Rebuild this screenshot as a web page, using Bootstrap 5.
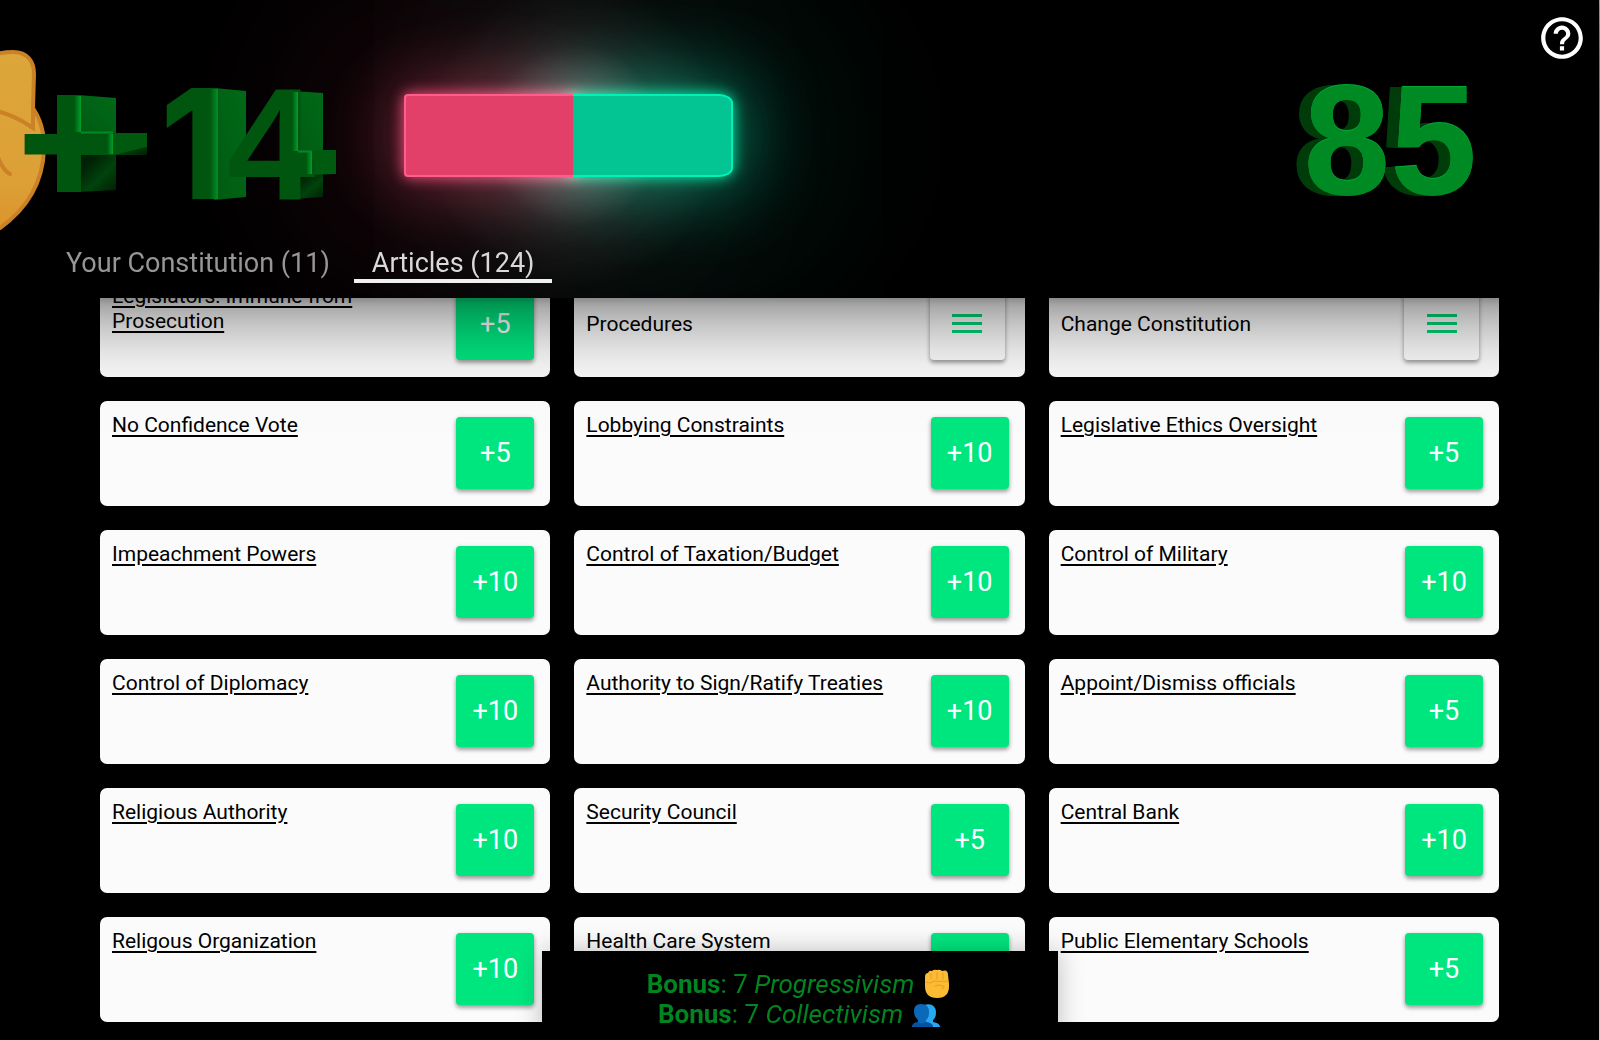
<!DOCTYPE html>
<html lang="en">
<head>
<meta charset="utf-8">
<meta name="viewport" content="width=device-width, initial-scale=1">
<title>Articles</title>
<link href="https://cdn.jsdelivr.net/npm/bootstrap@5.3.0/dist/css/bootstrap.min.css" rel="stylesheet">
<style>
  body { background: #000; color: #000; border-right: 1px solid #ccc; font-family: Roboto, "Noto Sans", sans-serif; font-size: 21px; line-height: 25px; overflow: hidden; }
  .topbar { right: 1px; height: 298px; isolation: isolate; box-shadow: 0 0 90px rgba(0,0,0,.75), 0 0 10px rgba(0,0,0,.25); background: #000; }
  .scene { height: 244px; }
  .scene-art { width: 360px; height: 244px; flex: none; overflow: hidden; font-family: Inter, "Liberation Sans", sans-serif; font-weight: 800; font-size: 152px; }
  .glyph-plus { font-size: 175px; font-weight: 700; }
  .glyph-four { font-family: "Liberation Sans", sans-serif; font-weight: 700; font-size: 160px; }
  .meter { width: 329px; height: 83px; margin: 94px 0 0 44px; position: relative; }
  .meter::before { content: ""; position: absolute; inset: -110px 10px -110px 22px; z-index: -1; background: radial-gradient(closest-side, rgba(190,200,200,.4), rgba(150,160,160,.08) 60%, transparent); }
  .meter-part { position: relative; border: 2px solid; }
  .meter-red { width: 169px; background: #e24069; border-color: #ff5c90; border-right: 0; border-radius: 4px 0 0 4px; }
  .meter-green { width: 160px; background: #03c593; border-color: #00f2b6; border-left: 0; border-radius: 0 14px 14px 0 / 0 9px 9px 0; }
  .meter-part::before { content: ""; position: absolute; inset: 0; z-index: -1; border-radius: inherit; mix-blend-mode: screen; }
  .meter-red::before { box-shadow: 0 0 14px 3px rgba(255,80,125,.9), 0 0 70px 10px rgba(226,64,105,.45), 0 0 190px 60px rgba(180,60,90,.24); }
  .meter-green::before { box-shadow: 0 0 14px 3px rgba(0,240,170,.9), 0 0 70px 12px rgba(3,197,147,.55), 0 0 190px 60px rgba(3,170,130,.24); }
  .total { font-family: "Liberation Sans", sans-serif; font-weight: 700; font-size: 156px; line-height: 184px; margin: 48px 122px 0 0; color: #008a24;
    text-shadow: 0 -1px #00a832, -1px 0 #003d0b, -2px 0 #003d0b, -3px 0 #003d0b, -4px 0 #003d0b, -5px 0 #003d0b, -6px 0 #003d0b, -7px 0 #003d0b, -8px 0 #003d0b, -9px 0 #003d0b, -10px 0 #003d0b, -11px 0 #003d0b, -12px 0 #003d0b; }
  .help-btn { top: 13px; right: 12px; width: 50px; height: 50px; color: #fff; }
  .tab-row { padding-left: 48px; gap: 6px; height: 54px; }
  .tab-link { font-size: 27px; line-height: 30px; padding: 4px 18px 0; height: 39px; border-bottom: 4px solid transparent; color: #969696; text-decoration: none; }
  .tab-link.active { color: #d9d9d9; border-color: #f0f0f0; }
  .articles { padding: 272px 100px 18px; }
  .tile-grid { display: grid; grid-template-columns: repeat(3, minmax(0, 1fr)); gap: 24px; }
  .tile { background: #fbfbfb; border-radius: 7px; height: 105px; padding: 12px 16px 16px 12px; }
  .tile a { color: #000; text-underline-offset: 3px; }
  .tile-name { max-width: 320px; }
  .points { width: 78px; height: 72px; margin-top: 4px; border: 0; border-radius: 4px; background: #00e67f; color: #fff; font-size: 27px; flex: none; padding: 0; box-shadow: 0 3px 4px rgba(0,0,0,.3), 0 1px 5px rgba(0,0,0,.15); }
  .points-menu { width: 75px; margin-right: 4px; background: #fbfbfb; color: #00d474; }
  .points-menu svg { display: block; margin: 0 auto; }
  .bonus { right: 1px; width: 516px; height: 89px; padding-top: 18px; background: #000; color: #008520; font-size: 26px; line-height: 30px; box-shadow: 0 0 24px rgba(0,0,0,.25); }
</style>
</head>
<body>
<header class="topbar position-fixed top-0 start-0 z-3 overflow-hidden">
  <div class="scene d-flex align-items-start">
    <svg class="scene-art" viewBox="0 0 360 244" role="img" aria-label="Plus 14">
      <defs>
        <linearGradient id="skin" x1="0" y1="0" x2="0" y2="1"><stop offset="0" stop-color="#dca63a"/><stop offset=".7" stop-color="#dca036"/><stop offset="1" stop-color="#dd922b"/></linearGradient>
        <linearGradient id="side" x1="0" y1="1" x2="1" y2="0"><stop offset="0" stop-color="#005a11"/><stop offset="1" stop-color="#006a18"/></linearGradient>
        <linearGradient id="under" x1="0" y1="0" x2="1" y2="1"><stop offset="0" stop-color="#001d04"/><stop offset=".25" stop-color="#002205"/><stop offset=".6" stop-color="#00430c"/><stop offset="1" stop-color="#001f04"/></linearGradient>
        <linearGradient id="edge"><stop offset="0" stop-color="#00560f"/><stop offset="1" stop-color="#00a02c"/></linearGradient>
      </defs>
      <path d="M-20 62Q-6 52 13 52C28 52 34 62 34 74L33 108Q45 126 44 150Q42 198 0 228L-20 236Z" fill="url(#skin)" stroke="#cb8126" stroke-width="4"/>
      <path d="M-3 111Q16 116 33 128L33 108M-4 152Q2 170 10 174" fill="none" stroke="#cb8126" stroke-width="4" stroke-linecap="round"/>
      <path d="M78 95L116 98V134H78Z" fill="url(#side)"/>
      <path d="M78 155H116V190L78 192Z" fill="url(#under)"/>
      <path d="M108 133L147 133V155H108Z" fill="url(#under)"/>
      <path d="M113 133H147V147L113 155Z" fill="#00590f"/>
      <path d="M214 88L246 91V197L214 200Z" fill="url(#side)"/>
      <path d="M292 91L323 93V152H292Z" fill="url(#side)"/>
      <path d="M292 174H323V197L292 199Z" fill="url(#under)"/>
      <path d="M306 150H336V174L306 175Z" fill="#005b10"/>
      <path d="M57 95H81V192H57ZM70 132H113V155H70ZM290 151H312V175H298V199H290ZM290 91H298V152H290Z" fill="#00560f"/>
      <g fill="#00560f">
        <text class="glyph-plus" x="9" y="195">+</text>
        <text x="160" y="199">1</text>
        <text class="glyph-four" x="227" y="199">4</text>
      </g>
      <g fill="url(#edge)">
        <rect x="74" y="96" width="7" height="36"/>
        <rect x="107" y="134" width="6" height="20"/>
        <rect x="210" y="89" width="8" height="110" opacity=".8"/>
        <rect x="292" y="92" width="6" height="59"/>
        <rect x="306" y="152" width="6" height="22"/>
      </g>
      <path d="M81 132.500H113M298 151.500H312" stroke="#008a26" stroke-width="2"/>
    </svg>
    <div class="meter d-flex" role="img" aria-label="Balance meter">
      <div class="meter-part meter-red"></div>
      <div class="meter-part meter-green"></div>
    </div>
    <div class="total ms-auto">85</div>
  </div>
  <button type="button" class="help-btn btn p-0 border-0 position-absolute" aria-label="Help">
    <svg class="d-block" width="50" height="50" viewBox="0 0 24 24" fill="currentColor"><path d="M11 18h2v-2h-2v2zm1-16C6.480 2 2 6.480 2 12s4.480 10 10 10 10-4.480 10-10S17.520 2 12 2zm0 18c-4.410 0-8-3.590-8-8s3.590-8 8-8 8 3.590 8 8-3.590 8-8 8zm0-14c-2.210 0-4 1.790-4 4h2c0-1.100.9-2 2-2s2 .9 2 2c0 2-3 1.750-3 5h2c0-2.250 3-2.500 3-5 0-2.210-1.790-4-4-4z"/></svg>
  </button>
  <nav class="tab-row d-flex align-items-start" aria-label="Sections">
    <a class="tab-link" href="#constitution">Your Constitution (11)</a>
    <a class="tab-link active" href="#articles" aria-current="page">Articles (124)</a>
  </nav>
</header>

<main class="articles" id="articles">
  <div class="tile-grid">
    <div class="tile d-flex justify-content-between"><div class="tile-name"><a href="#a">Legislators: Immune from Prosecution</a></div><button type="button" class="points">+5</button></div>
    <div class="tile d-flex justify-content-between"><div class="tile-name align-self-center mt-1">Procedures</div><button type="button" class="points points-menu" aria-label="Open Procedures"><svg width="30" height="20" viewBox="0 0 30 20" fill="currentColor"><path d="M0 0H30V3H0ZM0 8H30V11H0ZM0 16H30V19H0Z"/></svg></button></div>
    <div class="tile d-flex justify-content-between"><div class="tile-name align-self-center mt-1">Change Constitution</div><button type="button" class="points points-menu" aria-label="Open Change Constitution"><svg width="30" height="20" viewBox="0 0 30 20" fill="currentColor"><path d="M0 0H30V3H0ZM0 8H30V11H0ZM0 16H30V19H0Z"/></svg></button></div>

    <div class="tile d-flex justify-content-between"><div class="tile-name"><a href="#a">No Confidence Vote</a></div><button type="button" class="points">+5</button></div>
    <div class="tile d-flex justify-content-between"><div class="tile-name"><a href="#a">Lobbying Constraints</a></div><button type="button" class="points">+10</button></div>
    <div class="tile d-flex justify-content-between"><div class="tile-name"><a href="#a">Legislative Ethics Oversight</a></div><button type="button" class="points">+5</button></div>

    <div class="tile d-flex justify-content-between"><div class="tile-name"><a href="#a">Impeachment Powers</a></div><button type="button" class="points">+10</button></div>
    <div class="tile d-flex justify-content-between"><div class="tile-name"><a href="#a">Control of Taxation/Budget</a></div><button type="button" class="points">+10</button></div>
    <div class="tile d-flex justify-content-between"><div class="tile-name"><a href="#a">Control of Military</a></div><button type="button" class="points">+10</button></div>

    <div class="tile d-flex justify-content-between"><div class="tile-name"><a href="#a">Control of Diplomacy</a></div><button type="button" class="points">+10</button></div>
    <div class="tile d-flex justify-content-between"><div class="tile-name"><a href="#a">Authority to Sign/Ratify Treaties</a></div><button type="button" class="points">+10</button></div>
    <div class="tile d-flex justify-content-between"><div class="tile-name"><a href="#a">Appoint/Dismiss officials</a></div><button type="button" class="points">+5</button></div>

    <div class="tile d-flex justify-content-between"><div class="tile-name"><a href="#a">Religious Authority</a></div><button type="button" class="points">+10</button></div>
    <div class="tile d-flex justify-content-between"><div class="tile-name"><a href="#a">Security Council</a></div><button type="button" class="points">+5</button></div>
    <div class="tile d-flex justify-content-between"><div class="tile-name"><a href="#a">Central Bank</a></div><button type="button" class="points">+10</button></div>

    <div class="tile d-flex justify-content-between"><div class="tile-name"><a href="#a">Religous Organization</a></div><button type="button" class="points">+10</button></div>
    <div class="tile d-flex justify-content-between"><div class="tile-name"><a href="#a">Health Care System</a></div><button type="button" class="points" aria-label="Add Health Care System"></button></div>
    <div class="tile d-flex justify-content-between"><div class="tile-name"><a href="#a">Public Elementary Schools</a></div><button type="button" class="points">+5</button></div>
  </div>
</main>

<aside class="bonus position-fixed bottom-0 start-0 mx-auto text-center">
  <div class="d-flex justify-content-center align-items-center gap-2">
    <span><b>Bonus</b>: 7 <i>Progressivism</i></span>
    <svg width="30" height="30" viewBox="0 0 30 30" aria-hidden="true">
      <path d="M3 8Q3 4 6 4Q7 1 10 2Q12 0 15 1Q18 0 20 2Q26 0 26 6L27 15Q28 29 15 29Q3 29 3 17Z" fill="#fbbc34"/>
      <path d="M9 4V10M15 3V10M21 4V10M4 13Q8 15 12 12Q20 13 26 12M13 17Q19 15 22 18L20 20" fill="none" stroke="#eea02e" stroke-width="1.200" stroke-linecap="round"/>
    </svg>
  </div>
  <div class="d-flex justify-content-center align-items-center gap-2">
    <span><b>Bonus</b>: 7 <i>Collectivism</i></span>
    <svg width="30" height="30" viewBox="0 0 30 30" aria-hidden="true">
      <path d="M13 6Q24 3 25 13Q25 19 22 21V23Q29 24 29 28H14Z" fill="#27a9f2"/>
      <path d="M10 5Q18 5 18 13Q18 19 15 21V23Q22 24 22 28H1Q1 24 7 23V21Q3 18 3 12Q3 5 10 5Z" fill="#0c68b8"/>
      <path d="M7 23Q11 26 15 23Q22 24 22 28H1Q1 24 7 23Z" fill="#0752a0"/>
    </svg>
  </div>
</aside>
<script src="https://cdn.jsdelivr.net/npm/bootstrap@5.3.0/dist/js/bootstrap.bundle.min.js"></script>
</body>
</html>
